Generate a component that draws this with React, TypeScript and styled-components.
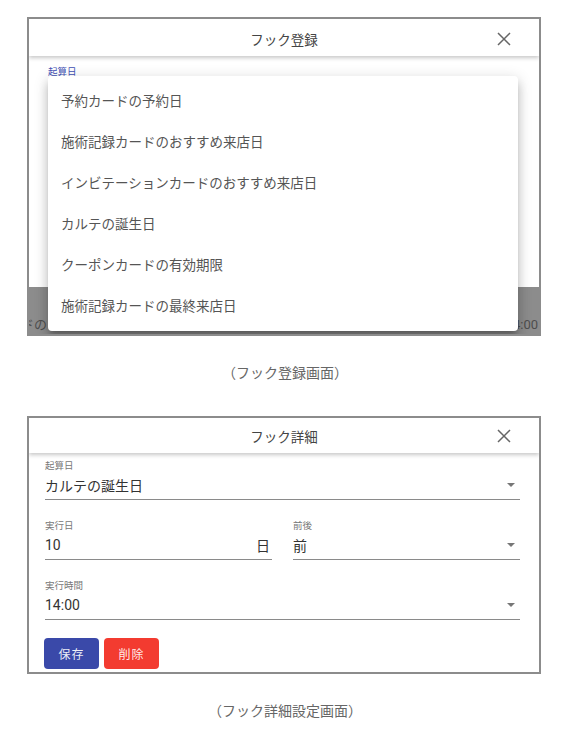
import React from "react";
import styled, { createGlobalStyle } from "styled-components";

const GlobalStyle = createGlobalStyle`
  html, body {
    margin: 0;
    padding: 0;
    background: #fff;
  }
  body {
    font-family: Roboto, "Noto Sans CJK JP", sans-serif;
    color: #333;
  }
  * {
    box-sizing: border-box;
  }
`;

const Page = styled.div`
  width: 570px;
  padding-top: 17px;
`;

const Shot = styled.div<{ $height: number }>`
  position: relative;
  margin-left: 27px;
  width: 514px;
  height: ${(p) => p.$height}px;
  border: 2px solid #8c8c8c;
  background: #fff;
  display: flex;
  flex-direction: column;
  overflow: hidden;
`;

const Header = styled.div<{ $height: number; $shift?: number }>`
  flex: none;
  position: relative;
  z-index: 1;
  height: ${(p) => p.$height}px;
  padding-top: ${(p) => p.$shift ?? 0}px;
  display: grid;
  grid-template-columns: 1fr auto 1fr;
  align-items: center;
  background: #fff;
  box-shadow: 0 2px 4px rgba(0, 0, 0, 0.22);
  font-size: 13.5px;
  color: #444;
`;

const Title = styled.div`
  grid-column: 2;
`;

const CloseButton = styled.div`
  grid-column: 3;
  justify-self: end;
  margin-right: 28px;
  width: 14px;
  height: 14px;
  display: flex;
`;

const DialogBody = styled.div`
  flex: 1;
  background: #fff;
  border-radius: 0 0 4px 4px;
  padding: 10px 19px 0;
`;

const Backdrop = styled.div`
  flex: none;
  height: 47px;
  background: #8c8c8c;
  display: flex;
  align-items: flex-end;
  justify-content: space-between;
  font-size: 13px;
  line-height: 18px;
  color: #4e4e4e;
  overflow: hidden;
  white-space: nowrap;
`;

const BehindLeft = styled.span`
  margin-left: -34px;
`;

const BehindRight = styled.span`
  margin-right: 1px;
`;

const Label = styled.div<{ $active?: boolean }>`
  font-size: 9.5px;
  line-height: 12px;
  color: ${(p) => (p.$active ? "#3f51b5" : "#777")};
`;

const Menu = styled.div`
  position: absolute;
  left: 19px;
  top: 57px;
  z-index: 2;
  width: 470px;
  padding: 4px 0 5px;
  background: #fff;
  border-radius: 4px;
  box-shadow: 0 5px 5px -3px rgba(0, 0, 0, 0.2), 0 8px 10px 1px rgba(0, 0, 0, 0.14),
    0 3px 14px 2px rgba(0, 0, 0, 0.12);
`;

const MenuItem = styled.div`
  height: 41px;
  display: flex;
  align-items: center;
  padding-left: 13px;
  padding-bottom: 2px;
  font-size: 13.5px;
  color: #555;
`;

const Caption = styled.div`
  height: 80px;
  padding-top: 27px;
  text-align: center;
  font-size: 14px;
  line-height: 20px;
  color: #666;
`;

const Form = styled.div`
  flex: 1;
  padding: 7px 19px 0 16px;
  display: flex;
  flex-direction: column;
  gap: 20px;
`;

const Row = styled.div`
  display: grid;
  grid-template-columns: 1fr 1fr;
  column-gap: 21px;
`;

const Field = styled.div`
  display: flex;
  flex-direction: column;
  gap: 3px;
  padding-bottom: 4px;
  border-bottom: 1px solid #8a8a8a;
`;

const ValueLine = styled.div`
  height: 20px;
  display: flex;
  align-items: center;
  justify-content: space-between;
  font-size: 14px;
  color: #333;
`;

const Suffix = styled.span`
  margin-right: 2px;
`;

const Arrow = styled.span`
  width: 0;
  height: 0;
  margin-right: 5px;
  border-left: 4px solid transparent;
  border-right: 4px solid transparent;
  border-top: 4px solid #777;
`;

const Actions = styled.div`
  display: flex;
  gap: 5px;
  margin-top: -2px;
  margin-left: -1px;
`;

const Button = styled.button<{ $tone: "primary" | "danger" }>`
  width: 55px;
  height: 31px;
  border: none;
  border-radius: 4px;
  padding: 0;
  font-family: inherit;
  font-size: 12px;
  letter-spacing: 1px;
  color: rgba(255, 255, 255, 0.92);
  background: ${(p) => (p.$tone === "primary" ? "#3a49a9" : "#f33b30")};
`;

const CloseIcon = () => (
  <svg width="14" height="14" viewBox="0 0 14 14">
    <path d="M1 1 L13 13 M13 1 L1 13" stroke="#666" strokeWidth="1.5" fill="none" />
  </svg>
);

const menuItems = [
  "予約カードの予約日",
  "施術記録カードのおすすめ来店日",
  "インビテーションカードのおすすめ来店日",
  "カルテの誕生日",
  "クーポンカードの有効期限",
  "施術記録カードの最終来店日",
];

const SelectField = ({ label, value }: { label: string; value: string }) => (
  <Field>
    <Label>{label}</Label>
    <ValueLine>
      {value}
      <Arrow />
    </ValueLine>
  </Field>
);

export default function App() {
  return (
    <Page>
      <GlobalStyle />

      {/* hook registration with open select menu */}
      <Shot $height={319}>
        <Header $height={37} $shift={3}>
          <Title>フック登録</Title>
          <CloseButton>
            <CloseIcon />
          </CloseButton>
        </Header>
        <DialogBody>
          <Label $active>起算日</Label>
        </DialogBody>
        <Backdrop>
          <BehindLeft>カードの</BehindLeft>
          <BehindRight>14:00</BehindRight>
        </Backdrop>
        <Menu>
          {menuItems.map((item) => (
            <MenuItem key={item}>{item}</MenuItem>
          ))}
        </Menu>
      </Shot>
      <Caption>（フック登録画面）</Caption>

      {/* hook detail */}
      <Shot $height={258}>
        <Header $height={35}>
          <Title>フック詳細</Title>
          <CloseButton>
            <CloseIcon />
          </CloseButton>
        </Header>
        <Form>
          <SelectField label="起算日" value="カルテの誕生日" />
          <Row>
            <Field>
              <Label>実行日</Label>
              <ValueLine>
                10
                <Suffix>日</Suffix>
              </ValueLine>
            </Field>
            <SelectField label="前後" value="前" />
          </Row>
          <SelectField label="実行時間" value="14:00" />
          <Actions>
            <Button $tone="primary">保存</Button>
            <Button $tone="danger">削除</Button>
          </Actions>
        </Form>
      </Shot>
      <Caption>（フック詳細設定画面）</Caption>
    </Page>
  );
}
